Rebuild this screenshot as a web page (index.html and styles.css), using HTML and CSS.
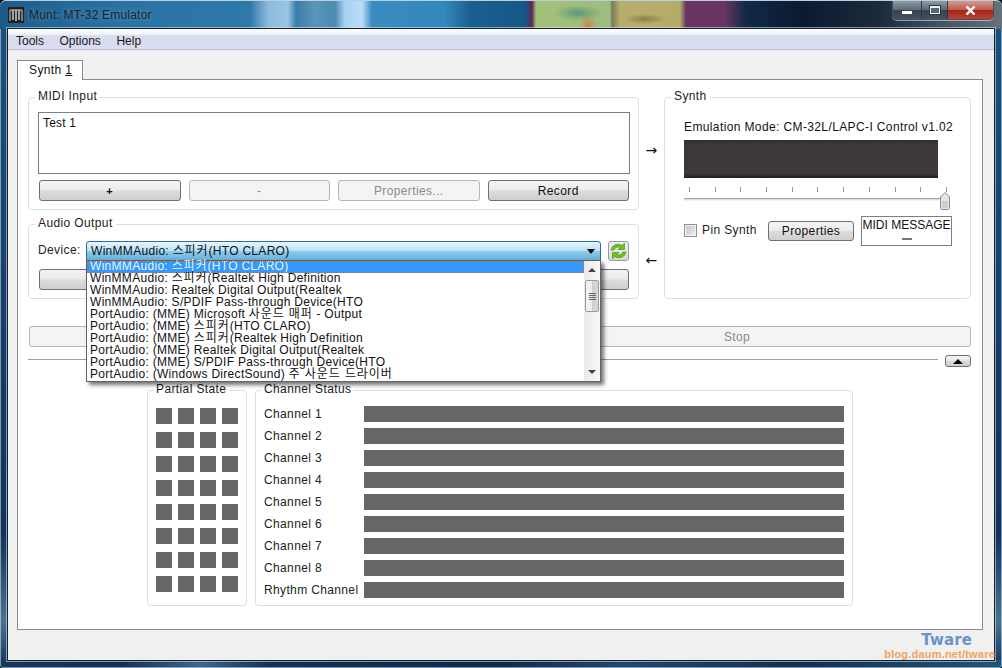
FILE: index.html
```html
<!DOCTYPE html>
<html lang="en">
<head>
<meta charset="utf-8">
<title>Munt: MT-32 Emulator</title>
<link rel="stylesheet" href="styles.css">
</head>
<body>
<div class="window">
  <header class="titlebar">
    <svg class="app-icon" width="16" height="16" viewBox="0 0 16 16"><rect width="16" height="16" fill="#222"/><path d="M2 14V3h3v10M5 13V3h3v11M8 14V3h3v10M11 13V3h3v11" fill="none" stroke="#cfcfcf" stroke-width="1"/></svg>
    <span class="title">Munt: MT-32 Emulator</span>
    <div class="caption-buttons">
      <div class="cap cap-min"><span class="min-glyph"></span></div>
      <div class="cap cap-max"><span class="max-glyph"></span></div>
      <div class="cap cap-close"><svg width="11" height="9" viewBox="0 0 11 9"><path d="M1.5 .5l8 8M9.5 .5l-8 8" stroke="#fff" stroke-width="2.4" fill="none"/></svg></div>
    </div>
  </header>
  <div class="client">
    <nav class="menubar"><span>Tools</span><span>Options</span><span>Help</span></nav>
    <div class="tabarea">
      <div class="tabstrip"><div class="tab">Synth <u>1</u></div></div>
      <main class="pane">
        <section class="top">
          <div class="left-col">
            <fieldset class="group midi">
              <legend>MIDI Input</legend>
              <div class="textbox">Test 1</div>
              <div class="btn-row">
                <button class="btn plus">+</button>
                <button class="btn" disabled>-</button>
                <button class="btn" disabled>Properties...</button>
                <button class="btn">Record</button>
              </div>
            </fieldset>
            <fieldset class="group audio">
              <legend>Audio Output</legend>
              <div class="device-row">
                <span class="device-label">Device:</span>
                <div class="combo-wrap">
                  <div class="combo"><span>WinMMAudio: <span class="ko">스피커</span>(HTO CLARO)</span><i class="combo-arrow"></i></div>
                  <div class="popup">
                    <ul class="list">
                      <li class="selected">WinMMAudio: <span class="ko">스피커</span>(HTO CLARO)</li>
                      <li>WinMMAudio: <span class="ko">스피커</span>(Realtek High Definition</li>
                      <li>WinMMAudio: Realtek Digital Output(Realtek</li>
                      <li>WinMMAudio: S/PDIF Pass-through Device(HTO</li>
                      <li>PortAudio: (MME) Microsoft <span class="ko">사운드 매퍼</span> - Output</li>
                      <li>PortAudio: (MME) <span class="ko">스피커</span>(HTO CLARO)</li>
                      <li>PortAudio: (MME) <span class="ko">스피커</span>(Realtek High Definition</li>
                      <li>PortAudio: (MME) Realtek Digital Output(Realtek</li>
                      <li>PortAudio: (MME) S/PDIF Pass-through Device(HTO</li>
                      <li>PortAudio: (Windows DirectSound) <span class="ko">주 사운드 드라이버</span></li>
                    </ul>
                    <div class="scrollbar">
                      <i class="sb-up"></i>
                      <div class="sb-thumb"><b></b><b></b><b></b><b></b></div>
                      <i class="sb-down"></i>
                    </div>
                  </div>
                </div>
                <button class="refresh" aria-label="Refresh">
                  <svg width="19" height="18" viewBox="0 0 19 18"><path d="M2 8C3 3.500 7 1.500 11 2.500L13.500 3.500 15.500 1V7.500H9L11.500 5.500C8.500 4.500 6 5.500 5 8Z" fill="#6fc21a" stroke="#3f8f10" stroke-width=".6"/><path d="M17 10C16 14.500 12 16.500 8 15.500L5.500 14.500 3.500 17V10.500H10L7.500 12.500C10.500 13.500 13 12.500 14 10Z" fill="#6fc21a" stroke="#3f8f10" stroke-width=".6"/></svg>
                </button>
              </div>
              <div class="btn-row"><button class="btn" aria-label="Advanced settings"></button></div>
            </fieldset>
          </div>
          <div class="arrows"><span>→</span><span>←</span></div>
          <fieldset class="group synth">
            <legend>Synth</legend>
            <div class="emu">Emulation Mode: CM-32L/LAPC-I Control v1.02</div>
            <div class="lcd"></div>
            <div class="slider">
              <div class="ticks"><i></i><i></i><i></i><i></i><i></i><i></i><i></i><i></i><i></i><i></i><i></i></div>
              <div class="track"></div>
              <svg class="handle" width="10" height="18" viewBox="0 0 10 18"><path d="M.5 5L5 .5 9.500 5V16.500L8.500 17.500H1.500L.5 16.500Z" fill="#e4e4e4" stroke="#8c8c8c"/><path d="M2 9h6v7H2z" fill="#cfcfcf"/></svg>
            </div>
            <div class="pin-row">
              <label class="pin"><i class="check"></i>Pin Synth</label>
              <button class="btn prop">Properties</button>
              <div class="midi-msg"><span>MIDI MESSAGE</span><i class="dash"></i></div>
            </div>
          </fieldset>
        </section>
        <div class="play-row">
          <button class="btn" disabled aria-label="Start"></button>
          <button class="btn" disabled>Stop</button>
        </div>
        <div class="sep-row">
          <hr class="sep">
          <button class="mini" aria-label="Collapse"><i></i></button>
        </div>
        <section class="status">
          <fieldset class="group partial">
            <legend>Partial State</legend>
            <div class="squares">
              <i></i><i></i><i></i><i></i><i></i><i></i><i></i><i></i>
              <i></i><i></i><i></i><i></i><i></i><i></i><i></i><i></i>
              <i></i><i></i><i></i><i></i><i></i><i></i><i></i><i></i>
              <i></i><i></i><i></i><i></i><i></i><i></i><i></i><i></i>
            </div>
          </fieldset>
          <fieldset class="group channels">
            <legend>Channel Status</legend>
            <div class="chan"><span>Channel 1</span><i></i></div>
            <div class="chan"><span>Channel 2</span><i></i></div>
            <div class="chan"><span>Channel 3</span><i></i></div>
            <div class="chan"><span>Channel 4</span><i></i></div>
            <div class="chan"><span>Channel 5</span><i></i></div>
            <div class="chan"><span>Channel 6</span><i></i></div>
            <div class="chan"><span>Channel 7</span><i></i></div>
            <div class="chan"><span>Channel 8</span><i></i></div>
            <div class="chan"><span>Rhythm Channel</span><i></i></div>
          </fieldset>
        </section>
      </main>
    </div>
  </div>
  <div class="watermark"><b class="wm1">Tware</b><b class="wm2">blog.daum.net/tware</b></div>
</div>
</body>
</html>
```
FILE: styles.css
```css
* { box-sizing: border-box; }
html, body { margin: 0; padding: 0; }
body {
  width: 1002px; height: 668px; overflow: hidden; background: #111;
  font-family: "Liberation Sans", "Noto Sans CJK KR", sans-serif;
  font-size: 12px; letter-spacing: .38px; color: #111;
}
.window {
  position: relative; width: 1002px; height: 668px;
  display: flex; flex-direction: column;
  border-radius: 6px 6px 3px 3px;
  box-shadow: inset 0 0 0 1px rgba(214,232,244,.55);
  background:
    linear-gradient(90deg, #17385a 0, #122f50 12%, #3d6688 20%, #123052 27%, #102a49 50%, #21476a 62%, #12304f 80%, #21557a 100%) 0 100% / 100% 8px no-repeat,
    linear-gradient(180deg, #1b527e 0, #173e66 50%, #12335a 80%, #4a7392 93%, #12335a 100%);
}
.titlebar {
  height: 29px; flex: none; display: flex; align-items: flex-start;
  padding-left: 8px; border-radius: 6px 6px 0 0;
  border-top: 1px solid #b7d0dd;
  background:
    radial-gradient(ellipse 9px 11px at 588px 24px, rgba(200,130,70,.9), rgba(200,130,70,0)),
    radial-gradient(ellipse 24px 8px at 578px 12px, rgba(70,140,120,.75), rgba(70,140,120,0)),
    radial-gradient(ellipse 22px 5px at 645px 18px, rgba(120,90,50,.6), rgba(120,90,50,0)),
    linear-gradient(90deg,
    #1c5b88 0, #2a72a4 120px, #2f78aa 250px, #8db9dc 268px, #98c4e4 288px,
    #3a7ea9 296px, #5a95b8 315px, #4a8bb1 335px, #a9d2f3 345px, #b9dcf8 362px,
    #3a8bc0 372px, #3387bd 445px, #1a5f90 470px, #155888 525px, #5c2a52 532px,
    #a3c07a 536px, #9fbc7e 610px, #7a7a5c 612px, #b8ae6c 620px, #b5ac6a 680px,
    #6a3560 686px, #683560 725px, #122a48 745px, #0b1a30 800px, #1c2a3c 880px,
    #3c4c5c 930px, #66727c 1002px);
}
.app-icon { margin-top: 6px; }
.title {
  margin-left: 5px; margin-top: 7px; line-height: 14px; color: #1a242e; letter-spacing: .2px;
  text-shadow: 0 0 6px rgba(255,255,255,.35);
}
.caption-buttons {
  margin-left: auto; margin-right: 8px; width: 102px; height: 19px;
  display: flex; border: 1px solid #46535e; border-top: 0;
  border-radius: 0 0 5px 5px; overflow: hidden;
  box-shadow: 0 1px 0 rgba(255,255,255,.5);
}
.cap { display: flex; align-items: center; justify-content: center; }
.cap-min, .cap-max {
  background: linear-gradient(#8e9aa4, #5c6a76 48%, #36434e 52%, #44525e);
  border-right: 1px solid #2c3842;
}
.cap-min { width: 29px; padding-top: 5px; }
.cap-max { width: 26px; }
.cap-close { flex: 1; background: linear-gradient(#d59a90, #bd5c4c 48%, #a2261a 52%, #bf4030); }
.min-glyph { width: 10px; height: 3px; background: #fff; }
.max-glyph { width: 10px; height: 8px; border: 1px solid #e8eef2; border-top-width: 2px; background: #5a6672; box-shadow: 0 0 0 1px #2a3642; }
.client {
  flex: 1; display: flex; flex-direction: column;
  margin: 0 8px 8px; background: #f0f0f0;
  box-shadow: 0 0 0 1px #15222e, 0 0 0 2px rgba(220,235,245,.55);
}
.menubar {
  height: 21px; flex: none; display: flex; gap: 15.5px; padding: 5px 0 0 8px;
  line-height: 14px; color: #1a1a1a; letter-spacing: 0;
  background: linear-gradient(#fbfcfe 0, #f3f5fb 5px, #d6dbee 7px, #d9ddf0 100%);
  border-bottom: 1px solid #b9bccd;
}
.tabarea { flex: 1; padding: 10px 11px 30px 9px; display: flex; flex-direction: column; }
.tabstrip { display: flex; height: 19px; flex: none; position: relative; z-index: 1; }
.tab {
  width: 66px; height: 20px; background: #fff; color: #111;
  border: 1px solid #898c95; border-bottom: 0;
  padding: 2px 0 0 11px; line-height: 15px;
}
.pane {
  flex: 1; background: #fff; border: 1px solid #898c95;
  padding: 10px 11px 0 10px; display: flex; flex-direction: column;
}
.top { display: flex; height: 209px; flex: none; }
.left-col { width: 611px; display: flex; flex-direction: column; gap: 7px; }
.group {
  margin: 0; min-width: 0; border: 1px solid #d6e0e6; border-radius: 4px;
  padding: 0;
}
.group legend { margin-left: -3px; padding: 0 3px 2px; line-height: 12px; color: #1c1c1c; }
.synth legend { margin-left: -13px; }
.midi { height: 120px; padding: 8px 8px 8px 9px; }
.textbox {
  height: 62px; border: 1px solid #7a7f85; padding: 3px 4px; line-height: 14px;
  margin-bottom: 6px; background: #fff; letter-spacing: .2px;
}
.btn-row { display: flex; gap: 8px; padding: 0 1px; }
.btn {
  flex: 1; height: 21px; padding: 0; font: inherit; letter-spacing: inherit; color: #111;
  border: 1px solid #707070; border-radius: 3px;
  background: linear-gradient(#f4f4f4 0, #ebebeb 48%, #dcdcdc 52%, #cfcfcf 100%);
}
.btn:disabled {
  color: #8a8a8a; border-color: #b5b5b5;
  background: #f4f4f4;
}
.btn.plus { font-weight: bold; font-size: 11px; }
.audio { height: 82px; padding: 10px 8px 8px 9px; }
.device-row { display: flex; align-items: flex-start; height: 21px; margin-bottom: 7px; }
.device-label { width: 48px; line-height: 19px; color: #222; }
.combo-wrap { position: relative; width: 515px; z-index: 2; }
.combo {
  height: 20px; display: flex; align-items: center; justify-content: space-between;
  padding: 0 5px 1px 4px; color: #101010; letter-spacing: .3px; line-height: 14px;
  border: 1px solid #2f6c99; border-radius: 3px 3px 0 0;
  background: linear-gradient(#e8f6fe 0, #b9e0f6 48%, #8ccbec 52%, #67b0da 100%);
}
.combo-arrow { width: 0; height: 0; border: 4px solid transparent; border-top: 5px solid #000; border-bottom: 0; margin-top: 1px; }
.ko { letter-spacing: .9px; }
.popup {
  position: absolute; left: 0; top: 19px; width: 515px; height: 122px;
  display: flex; background: #fff; border: 1px solid #5f6266;
  box-shadow: 3px 3px 4px rgba(0,0,0,.55);
}
.list { flex: 1; margin: 0; padding: 0; list-style: none; font-size: 12px; letter-spacing: .3px; }
.list li { height: 12px; line-height: 11px; padding-left: 3px; white-space: nowrap; color: #111; }
.list .selected { background: #3399ff; color: #e8f2ff; outline: 1px dotted #d96a1c; outline-offset: -1px; }
.scrollbar {
  width: 16px; display: flex; flex-direction: column; align-items: center; position: relative;
  background: linear-gradient(90deg, #e9e9e9, #f8f8f8);
  padding-top: 7px;
}
.sb-up { width: 0; height: 0; border: 4px solid transparent; border-top: 0; border-bottom: 4px solid #444; }
.sb-thumb {
  margin-top: 8px; width: 14px; height: 32px; border: 1px solid #9a9a9a; border-radius: 2px;
  display: flex; flex-direction: column; align-items: center; justify-content: center; gap: 1px;
  background: linear-gradient(90deg, #f4f4f4 0, #ececec 50%, #cfcfcf 52%, #d8d8d8 100%);
}
.sb-thumb b { width: 7px; height: 1px; background: #666; }
.sb-down { margin-top: auto; margin-bottom: 7px; width: 0; height: 0; border: 4px solid transparent; border-bottom: 0; border-top: 4px solid #444; }
.refresh {
  margin-left: 7px; width: 21px; height: 20px; padding: 0;
  display: flex; align-items: center; justify-content: center;
  border: 1px solid #9a9a9a; border-radius: 3px;
  background: linear-gradient(#f2f2f2, #d8d8d8);
}
.arrows {
  width: 25px; flex: none; display: flex; flex-direction: column; justify-content: space-between;
  align-items: center; padding: 53px 0 32px; line-height: 14px; font-size: 14px; color: #111;
  font-family: "DejaVu Sans", sans-serif;
}
.synth { width: 307px; height: 209px; padding: 16px 0 0 19px; }
.emu { line-height: 14px; white-space: nowrap; color: #111; letter-spacing: .38px; }
.lcd {
  width: 254px; height: 38px; margin-top: 6px;
  background:
    repeating-linear-gradient(90deg, rgba(80,50,55,.1) 0 3px, rgba(40,46,52,.1) 3px 7px, rgba(60,54,48,.08) 7px 12px),
    linear-gradient(#2e2d33, #3d383a 12%, #3e383a 88%, #1f1c20 100%);
}
.slider { position: relative; width: 266px; height: 32px; margin-top: 9px; }
.ticks { display: flex; justify-content: space-between; padding: 0 3px 0 5px; }
.ticks i { width: 1px; height: 5px; background: #9a9a90; }
.track {
  margin-top: 6px; height: 3px; margin-right: 5px;
  background: linear-gradient(#a9a9a9 0 1px, #dcdcdc 1px 2px, #f2f2f2 2px);
}
.handle { position: absolute; right: 0; top: 5px; }
.pin-row { display: flex; align-items: flex-start; margin-top: -3px; }
.pin { display: flex; align-items: center; width: 84px; height: 28px; line-height: 14px; color: #222; }
.check {
  width: 13px; height: 13px; margin-right: 5px; border: 1px solid #8e8f8f;
  background: linear-gradient(135deg, #c4c4c4, #f0f0f0);
  box-shadow: inset 0 0 0 1px #f4f4f4;
}
.btn.prop { flex: none; width: 86px; height: 20px; margin-top: 5px; }
.midi-msg {
  margin-left: 7px; width: 91px; height: 30px; border: 1px solid #7a7f85;
  display: flex; flex-direction: column; align-items: center; line-height: 14px;
  font-size: 12px; letter-spacing: 0; white-space: nowrap; padding-top: 1px;
}
.dash { width: 10px; height: 2px; background: #777; margin-top: 6px; }
.play-row { display: flex; gap: 6px; margin: 27px 0 0 1px; }
.sep-row { display: flex; align-items: flex-start; gap: 7px; margin-top: 8px; height: 12px; }
.sep { flex: 1; margin: 4px 0 0; border: 0; height: 1px; background: #a0a0a0; }
.mini {
  width: 26px; height: 12px; padding: 0; flex: none;
  display: flex; align-items: center; justify-content: center;
  border: 1px solid #707070; border-radius: 3px;
  background: linear-gradient(#f4f4f4, #e8e8e8 48%, #d8d8d8 52%, #cfcfcf);
}
.mini i { width: 0; height: 0; border: 5px solid transparent; border-top: 0; border-bottom: 5px solid #000; }
.status { display: flex; gap: 8px; margin: 16px 0 0 119px; }
.partial { width: 100px; height: 223px; padding: 11px 0 0 8px; flex: none; }
.squares { display: grid; grid-template-columns: repeat(4, 16px); grid-auto-rows: 16px; gap: 8px 6px; }
.squares i { background: #666; }
.channels { width: 598px; height: 223px; padding: 9px 8px 0 8px; flex: none; }
.chan { display: flex; height: 16px; margin-bottom: 6px; align-items: center; }
.chan span { width: 100px; flex: none; color: #222; white-space: nowrap; letter-spacing: .36px; }
.chan i { flex: 1; height: 16px; background: #666; }
.watermark {
  position: absolute; right: 7px; bottom: 8px; display: flex; flex-direction: column; align-items: flex-end;
}
.wm1 { font-family: "DejaVu Sans", sans-serif; font-size: 15px; line-height: 16px; color: #6a94c8; margin-right: 23px; letter-spacing: .1px; }
.wm2 { font-size: 11px; line-height: 12px; color: #f0a35c; letter-spacing: .2px; }
```
